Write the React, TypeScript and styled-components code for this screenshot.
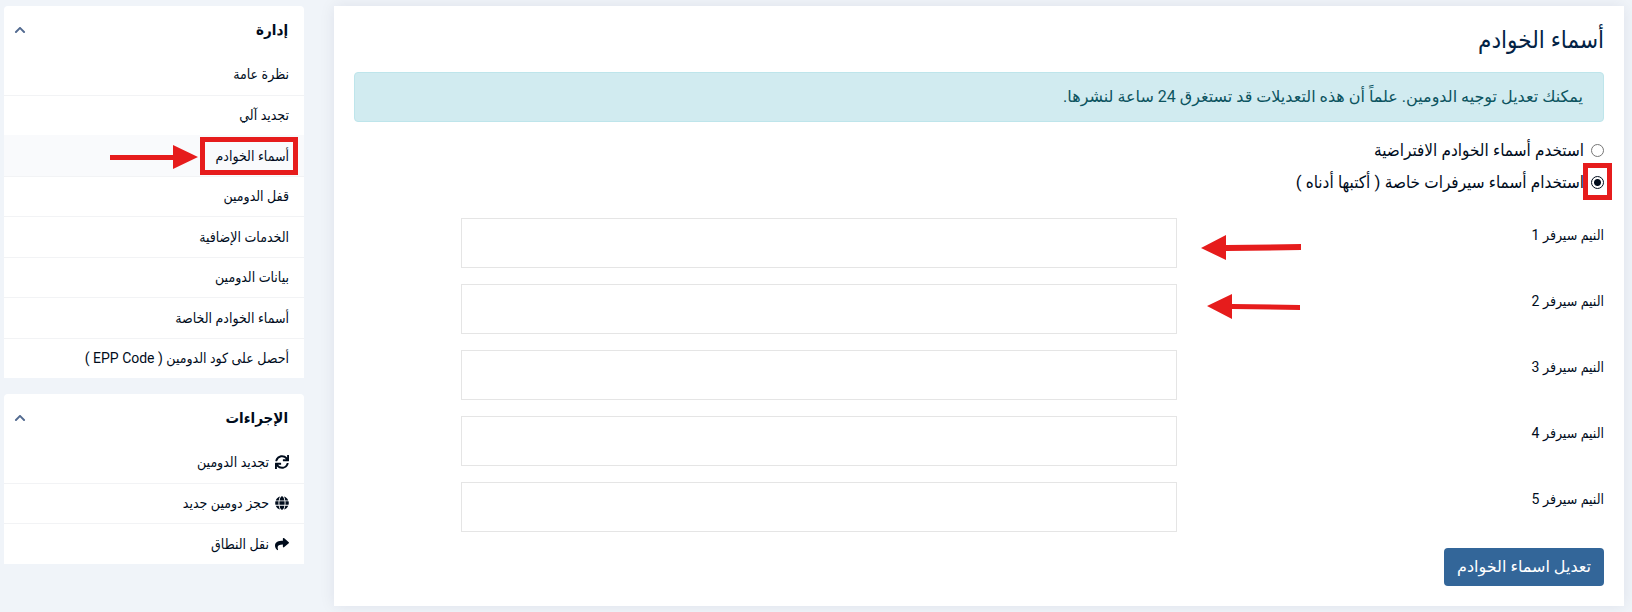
import React, { useState } from "react";
import styled, { createGlobalStyle, css } from "styled-components";
import { FaChevronUp, FaGlobe, FaShare, FaSync } from "react-icons/fa";

const Global = createGlobalStyle`
  *, *::before, *::after { box-sizing: border-box; }
  body {
    margin: 0;
    background: #f0f4f9;
    color: #000c1c;
    font-family: Roboto, "DejaVu Sans Condensed", "DejaVu Sans", sans-serif;
    font-size: 14px;
    line-height: 20px;
  }
`;

const Page = styled.div`
  display: flex;
  align-items: flex-start;
  gap: 30px;
  padding: 6px 8px 6px 4px;
`;

const Content = styled.main`
  flex: 1;
  min-width: 0;
  padding: 20px;
  background: #fff;
  box-shadow: 0 0 15px rgba(20, 30, 60, 0.08);
`;

const Title = styled.h1`
  margin: 0 0 18px;
  color: #032345;
  font-size: 24px;
  font-weight: 400;
  line-height: 28px;
`;

const Notice = styled.p`
  margin: 0 0 16px;
  padding: 12px 20px;
  border: 1px solid #bee5eb;
  border-radius: 4px;
  background: #d1ebf0;
  color: #0c5460;
  font-family: Roboto, "DejaVu Sans", sans-serif;
  font-size: 16px;
  line-height: 24px;
`;

const Choices = styled.fieldset`
  display: grid;
  gap: 8px;
  margin: 0 0 24px;
  padding: 0;
  border: 0;
`;

const Choice = styled.label`
  display: flex;
  align-items: center;
  gap: 7px;
  font-size: 17px;
  line-height: 24px;
`;

const RadioSlot = styled.span`
  position: relative;
  display: flex;
`;

const Radio = styled.input`
  appearance: none;
  width: 13px;
  height: 13px;
  margin: 0;
  border: 1px solid #767676;
  border-radius: 50%;
  background: #fff;
  &:checked {
    border-color: #000c1c;
    background: radial-gradient(circle, #000c1c 0 3px, #fff 4px);
  }
`;

const ServerRow = styled.div`
  display: grid;
  grid-template-columns: repeat(12, minmax(0, 1fr));
  column-gap: 30px;
  margin-bottom: 16px;
`;

const ServerLabel = styled.label`
  position: relative;
  grid-column: span 4;
  padding-top: 7px;
`;

const ServerInput = styled.input`
  grid-column: span 7;
  width: 100%;
  height: 50px;
  padding: 0 12px;
  border: 1px solid #e5e5e5;
  background: #fff;
  font: inherit;
`;

const Submit = styled.button`
  display: block;
  padding: 7px 13px;
  border: 0;
  border-radius: 4px;
  background: #336699;
  color: #fff;
  font-family: Roboto, "DejaVu Sans", sans-serif;
  font-size: 16px;
  line-height: 24px;
`;

const Sidebar = styled.aside`
  display: grid;
  gap: 16px;
  width: 300px;
  flex: none;
`;

const Panel = styled.section`
  border-radius: 4px 4px 0 0;
  background: #fff;
`;

const PanelHead = styled.button`
  display: flex;
  align-items: center;
  justify-content: space-between;
  width: 100%;
  height: 48px;
  padding: 0 16px 0 10px;
  border: 0;
  background: none;
  color: inherit;
  font-family: inherit;
  font-size: 15px;
  font-weight: 700;
  line-height: 24px;
  svg { width: 12px; height: 12px; color: #526a90; }
`;

const Menu = styled.ul<{ $height: number }>`
  display: grid;
  grid-auto-rows: 1fr;
  min-height: ${(p) => p.$height}px;
  margin: 0;
  padding: 0;
  list-style: none;
`;

const MenuItem = styled.li<{ $active?: boolean }>`
  display: flex;
  align-items: center;
  padding: 0 15px;
  & + & { border-top: 1px solid #f2f3f5; }
  ${(p) => p.$active && css`&& { background: #f9fafc; border-color: #f9fafc; }`}
`;

const MenuLink = styled.a`
  position: relative;
  display: flex;
  align-items: center;
  gap: 6px;
  color: inherit;
  font-size: 14px;
  text-decoration: none;
  svg { width: 14px; height: 14px; }
`;

const Frame = styled.span<{ $inset: string }>`
  position: absolute;
  inset: ${(p) => p.$inset};
  border: 5px solid #e61c1c;
  pointer-events: none;
`;

const arrowBase = css`
  position: absolute;
  overflow: visible;
  fill: #e61c1c;
  pointer-events: none;
`;

const MenuArrow = styled.svg`
  ${arrowBase}
  right: calc(100% + 18px);
  top: -2px;
  && { width: 88px; height: 26px; }
`;

const RowArrow = styled.svg<{ $left: number; $top: number }>`
  ${arrowBase}
  left: ${(p) => p.$left}px;
  top: ${(p) => p.$top}px;
  width: 100px;
  height: 26px;
`;

const manage = [
  "نظرة عامة",
  "تجديد آلي",
  "أسماء الخوادم",
  "قفل الدومين",
  "الخدمات الإضافية",
  "بيانات الدومين",
  "أسماء الخوادم الخاصة",
  "أحصل على كود الدومين ( EPP Code )",
];

const actions = [
  { text: "تجديد الدومين", Icon: FaSync },
  { text: "حجز دومين جديد", Icon: FaGlobe },
  { text: "نقل النطاق", Icon: FaShare },
];

const rowArrows: Record<number, { left: number; top: number; shape: string }> = {
  1: { left: -6, top: 17, shape: "M0 13 25 0V10L100 9V15L25 16V25Z" },
  2: { left: 0, top: 9, shape: "M0 13 25 1V11L93 12V17L25 16V26Z" },
};

export default function App() {
  const [mode, setMode] = useState("custom");
  return (
    <>
      <Global />
      <Page dir="rtl" lang="ar">
        <Content>
          <Title>أسماء الخوادم</Title>
          <Notice>يمكنك تعديل توجيه الدومين. علماً أن هذه التعديلات قد تستغرق 24 ساعة لنشرها.</Notice>
          <form onSubmit={(e) => e.preventDefault()}>
            <Choices>
              <Choice>
                <RadioSlot>
                  <Radio type="radio" name="mode" checked={mode === "default"} onChange={() => setMode("default")} />
                </RadioSlot>
                استخدم أسماء الخوادم الافتراضية
              </Choice>
              <Choice>
                <RadioSlot>
                  <Radio type="radio" name="mode" checked={mode === "custom"} onChange={() => setMode("custom")} />
                  <Frame $inset="-13px -8px -11px" />
                </RadioSlot>
                استخدام أسماء سيرفرات خاصة ( أكتبها أدناه )
              </Choice>
            </Choices>
            {[1, 2, 3, 4, 5].map((n) => (
              <ServerRow key={n}>
                <ServerLabel htmlFor={`ns${n}`}>
                  النيم سيرفر {n}
                  {rowArrows[n] && (
                    <RowArrow
                      $left={rowArrows[n].left}
                      $top={rowArrows[n].top}
                      viewBox="0 0 100 26"
                      aria-hidden="true"
                    >
                      <path d={rowArrows[n].shape} />
                    </RowArrow>
                  )}
                </ServerLabel>
                <ServerInput id={`ns${n}`} type="text" />
              </ServerRow>
            ))}
            <Submit type="submit">تعديل اسماء الخوادم</Submit>
          </form>
        </Content>
        <Sidebar>
          <Panel>
            <PanelHead type="button" aria-expanded="true">إدارة<FaChevronUp /></PanelHead>
            <Menu $height={324}>
              {manage.map((text, i) => (
                <MenuItem key={text} $active={i === 2}>
                  <MenuLink href="#">
                    {text}
                    {i === 2 && (
                      <>
                        <Frame $inset="-9px -9px -9px -16px" />
                        <MenuArrow viewBox="0 0 88 26" aria-hidden="true">
                          <path d="M0 11H63V1L88 13 63 25V16H0Z" />
                        </MenuArrow>
                      </>
                    )}
                  </MenuLink>
                </MenuItem>
              ))}
            </Menu>
          </Panel>
          <Panel>
            <PanelHead type="button" aria-expanded="true">الإجراءات<FaChevronUp /></PanelHead>
            <Menu $height={122}>
              {actions.map(({ text, Icon }) => (
                <MenuItem key={text}>
                  <MenuLink href="#"><Icon />{text}</MenuLink>
                </MenuItem>
              ))}
            </Menu>
          </Panel>
        </Sidebar>
      </Page>
    </>
  );
}
